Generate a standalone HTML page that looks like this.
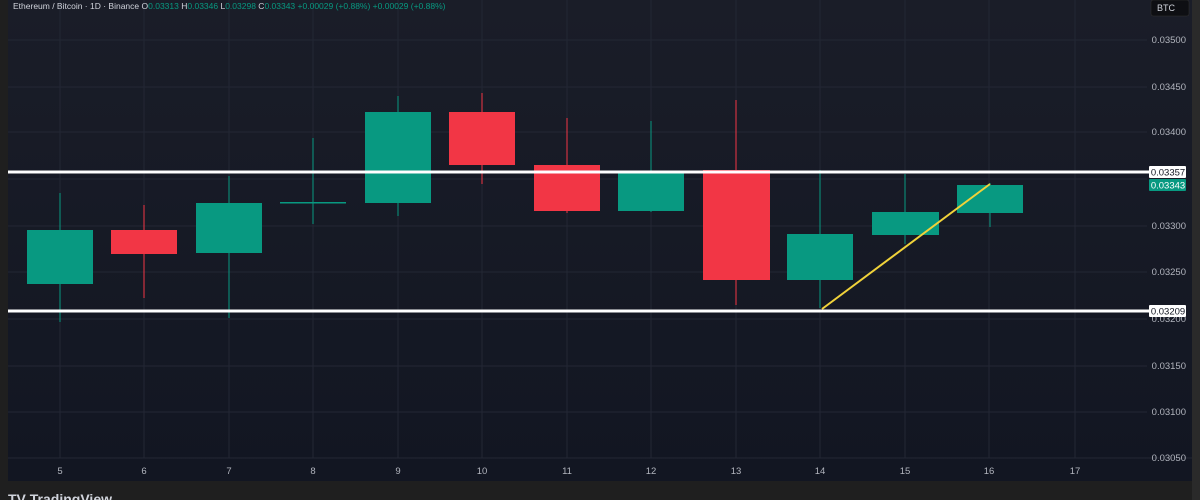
<!DOCTYPE html>
<html><head><style>
html,body{margin:0;padding:0;background:#1f1f1f;width:1200px;height:500px;overflow:hidden}
svg{display:block}
text{font-family:"Liberation Sans",sans-serif}
</style></head><body>
<svg width="1200" height="500" viewBox="0 0 1200 500">
<defs><linearGradient id="bg" x1="0" y1="0" x2="0" y2="1"><stop offset="0" stop-color="#1a1d28"/><stop offset="1" stop-color="#121622"/></linearGradient></defs>
<rect x="0" y="0" width="1200" height="500" fill="#1f1f1f"/>
<rect x="8" y="0" width="1184" height="481" fill="url(#bg)"/>
<g stroke="#232734" stroke-width="1">
<line x1="8" y1="40" x2="1147" y2="40"/><line x1="8" y1="87" x2="1147" y2="87"/><line x1="8" y1="132" x2="1147" y2="132"/><line x1="8" y1="179" x2="1147" y2="179"/><line x1="8" y1="226" x2="1147" y2="226"/><line x1="8" y1="272" x2="1147" y2="272"/><line x1="8" y1="319" x2="1147" y2="319"/><line x1="8" y1="366" x2="1147" y2="366"/><line x1="8" y1="412" x2="1147" y2="412"/>
<line x1="60" y1="0" x2="60" y2="458"/><line x1="144" y1="0" x2="144" y2="458"/><line x1="229" y1="0" x2="229" y2="458"/><line x1="313" y1="0" x2="313" y2="458"/><line x1="398" y1="0" x2="398" y2="458"/><line x1="482" y1="0" x2="482" y2="458"/><line x1="567" y1="0" x2="567" y2="458"/><line x1="651" y1="0" x2="651" y2="458"/><line x1="736" y1="0" x2="736" y2="458"/><line x1="820" y1="0" x2="820" y2="458"/><line x1="905" y1="0" x2="905" y2="458"/><line x1="989" y1="0" x2="989" y2="458"/><line x1="1075" y1="0" x2="1075" y2="458"/>
<line x1="8" y1="458" x2="1192" y2="458"/>
</g>
<g stroke-width="1">
<line x1="60" y1="193" x2="60" y2="322" stroke="#089981"/><rect x="27" y="230" width="66" height="54" fill="#089981"/>
<line x1="144" y1="205" x2="144" y2="298" stroke="#f23645"/><rect x="111" y="230" width="66" height="24" fill="#f23645"/>
<line x1="229" y1="176" x2="229" y2="318" stroke="#089981"/><rect x="196" y="203" width="66" height="50" fill="#089981"/>
<line x1="313" y1="138" x2="313" y2="224" stroke="#089981"/><rect x="280" y="202" width="66" height="1.5" fill="#089981"/>
<line x1="398" y1="96" x2="398" y2="216" stroke="#089981"/><rect x="365" y="112" width="66" height="91" fill="#089981"/>
<line x1="482" y1="93" x2="482" y2="184" stroke="#f23645"/><rect x="449" y="112" width="66" height="53" fill="#f23645"/>
<line x1="567" y1="118" x2="567" y2="213" stroke="#f23645"/><rect x="534" y="165" width="66" height="46" fill="#f23645"/>
<line x1="651" y1="121" x2="651" y2="212" stroke="#089981"/><rect x="618" y="172" width="66" height="39" fill="#089981"/>
<line x1="736" y1="100" x2="736" y2="305" stroke="#f23645"/><rect x="703" y="170" width="67" height="110" fill="#f23645"/>
<line x1="820" y1="170" x2="820" y2="308" stroke="#089981"/><rect x="787" y="234" width="66" height="46" fill="#089981"/>
<line x1="905" y1="174" x2="905" y2="244" stroke="#089981"/><rect x="872" y="212" width="67" height="23" fill="#089981"/>
<line x1="990" y1="183" x2="990" y2="227" stroke="#089981"/><rect x="957" y="185" width="66" height="28" fill="#089981"/>
</g>
<line x1="822" y1="309" x2="990" y2="184" stroke="#f0d23a" stroke-width="2"/>
<line x1="8" y1="172" x2="1150" y2="172" stroke="#fff" stroke-width="3"/>
<line x1="8" y1="311" x2="1150" y2="311" stroke="#fff" stroke-width="3"/>
<g fill="#b2b5be" font-size="9.5" text-anchor="end">
<text x="1186" y="43">0.03500</text><text x="1186" y="90">0.03450</text><text x="1186" y="135">0.03400</text><text x="1186" y="229">0.03300</text><text x="1186" y="275">0.03250</text><text x="1186" y="322">0.03200</text><text x="1186" y="369">0.03150</text><text x="1186" y="415">0.03100</text><text x="1186" y="461">0.03050</text>
</g>
<rect x="1149" y="166" width="37" height="12" fill="#fff" rx="1"/><text x="1168" y="175.5" font-size="9.5" fill="#131722" text-anchor="middle">0.03357</text>
<rect x="1149" y="179" width="37" height="12" fill="#089981" rx="1"/><text x="1168" y="188.5" font-size="9.5" fill="#fff" text-anchor="middle">0.03343</text>
<rect x="1149" y="305" width="37" height="12" fill="#fff" rx="1"/><text x="1168" y="314.5" font-size="9.5" fill="#131722" text-anchor="middle">0.03209</text>
<rect x="1151" y="0" width="38" height="16" fill="#0e0f13" rx="2" stroke="#333" stroke-width="0.5"/><text x="1166" y="11" font-size="9" fill="#d1d4dc" text-anchor="middle">BTC</text>
<g fill="#b2b5be" font-size="9.5" text-anchor="middle">
<text x="60" y="474">5</text><text x="144" y="474">6</text><text x="229" y="474">7</text><text x="313" y="474">8</text><text x="398" y="474">9</text><text x="482" y="474">10</text><text x="567" y="474">11</text><text x="651" y="474">12</text><text x="736" y="474">13</text><text x="820" y="474">14</text><text x="905" y="474">15</text><text x="989" y="474">16</text><text x="1075" y="474">17</text>
</g>
<text x="13" y="9" font-size="8.5" fill="#d1d4dc">Ethereum / Bitcoin · 1D · Binance <tspan>O</tspan><tspan fill="#089981">0.03313</tspan> H<tspan fill="#089981">0.03346</tspan> L<tspan fill="#089981">0.03298</tspan> C<tspan fill="#089981">0.03343</tspan> <tspan fill="#089981">+0.00029 (+0.88%)  +0.00029 (+0.88%)</tspan></text>
<rect x="1192" y="0" width="8" height="500" fill="#2a2a2a"/>
<text x="8" y="504" font-size="14" font-weight="bold" fill="#d1d4dc">TV TradingView</text>
</svg>
</body></html>
